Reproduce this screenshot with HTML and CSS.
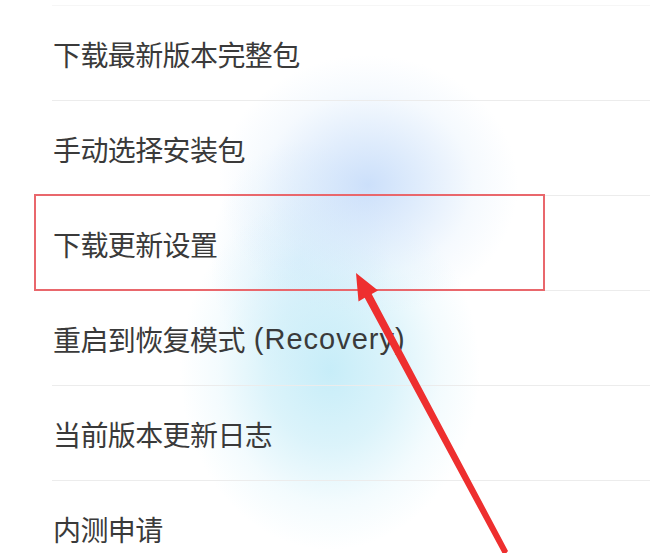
FILE: index.html
```html
<!DOCTYPE html>
<html lang="zh-CN">
<head>
<meta charset="utf-8">
<title>系统更新</title>
<link rel="stylesheet" href="styles.css">
</head>
<body>
<div class="screen">
  <ul class="menu">
    <li class="row first">下载最新版本完整包</li>
    <li class="row">手动选择安装包</li>
    <li class="row">下载更新设置</li>
    <li class="row">重启到恢复模式<span class="latin"> (Recovery)</span></li>
    <li class="row">当前版本更新日志</li>
    <li class="row">内测申请</li>
  </ul>
  <div class="highlight"></div>
  <svg class="arrow" width="650" height="553" viewBox="0 0 650 553" xmlns="http://www.w3.org/2000/svg">
    <polygon points="356,273 378,290.5 371.7,294 508,551 504,556 364.7,297.8 358.5,301.5" fill="#ee2f2f"/>
  </svg>
</div>
</body>
</html>
```

FILE: styles.css
```css
html, body {
  margin: 0;
  padding: 0;
  background: #ffffff;
}

.screen {
  position: relative;
  width: 650px;
  height: 553px;
  overflow: hidden;
  background:
    radial-gradient(ellipse 150px 130px at 368px 185px, rgba(198, 220, 250, 0.9) 0%, rgba(203, 224, 250, 0.6) 35%, rgba(210, 230, 250, 0.22) 70%, rgba(210, 230, 250, 0) 100%),
    radial-gradient(ellipse 150px 180px at 330px 370px, rgba(196, 236, 248, 0.95) 0%, rgba(200, 237, 248, 0.65) 42%, rgba(208, 240, 250, 0.25) 74%, rgba(208, 240, 250, 0) 100%),
    radial-gradient(ellipse 90px 120px at 300px 260px, rgba(205, 232, 250, 0.6) 0%, rgba(205, 232, 250, 0) 100%),
    #ffffff;
  font-family: "Liberation Sans", "Noto Sans CJK SC", sans-serif;
}

.menu {
  list-style: none;
  margin: 0;
  padding: 5px 0 0 52px;
}

.row {
  border-top: 1px solid #ececec;
  display: flex;
  align-items: center;
  padding: 2px 0 0 1px;
  box-sizing: border-box;
  height: 95px;
  font-size: 28px;
  color: #3a3a3a;
  letter-spacing: -0.6px;
  white-space: nowrap;
}

.row.first {
  border-top-color: #f6f6f6;
}

.latin {
  white-space: pre;
  font-size: 29px;
  letter-spacing: 1px;
}

.highlight {
  position: absolute;
  left: 34px;
  top: 194px;
  width: 511px;
  height: 97px;
  box-sizing: border-box;
  border: 2px solid #e9676c;
}

.arrow {
  position: absolute;
  left: 0;
  top: 0;
}
```
